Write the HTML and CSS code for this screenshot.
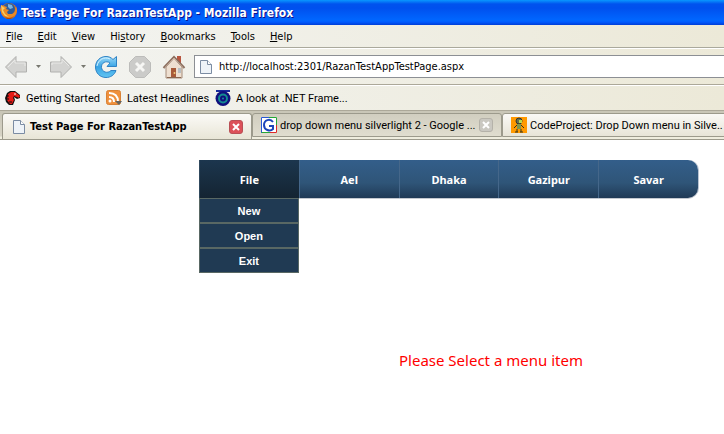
FILE: index.html
```html
<!DOCTYPE html>
<html lang="en">
<head>
    <meta charset="utf-8">
    <title>Test Page For RazanTestApp</title>
    <link rel="stylesheet" href="styles.css">
</head>
<body>
    <header class="browser">
        <div class="titlebar">
            <svg class="logo" width="18" height="18" viewBox="0 0 18 18">
                <circle cx="9" cy="9" r="8" fill="#d9781d"/>
                <circle cx="9" cy="7" r="6" fill="#2b5c9d"/>
                <path d="M8 2l4 1 1 3-3 1-2-2z" fill="#79b4df"/>
                <path d="M1 3l3 1 3 1-1 2 3 1-2 2 1 2 4 0 3-2 1-6 1 4-1 4-4 4H6L2 13 0 8z" fill="#e98a25"/>
                <path d="M1 3l2 2 2 1-2 2 2 4 4 3-4-1-3-4z" fill="#f7cd62"/>
                <path d="M4 14q5 4 10 0l-3 3H7z" fill="#a94710"/>
            </svg>
            <span>Test Page For RazanTestApp - Mozilla Firefox</span>
        </div>

        <nav class="menubar">
            <button><u>F</u>ile</button>
            <button><u>E</u>dit</button>
            <button><u>V</u>iew</button>
            <button>Hi<u>s</u>tory</button>
            <button><u>B</u>ookmarks</button>
            <button><u>T</u>ools</button>
            <button><u>H</u>elp</button>
        </nav>

        <div class="toolbar">
            <button class="nav-button" aria-label="Back">
                <svg width="24" height="24" viewBox="0 0 24 24"><path d="M1.500 12L12 1.500V7h10.500v10H12v5.500z" fill="#d3d3d1" stroke="#b0b0ae"/><path d="M4 12l7-7v3h10v3" fill="none" stroke="#e9e9e7"/></svg>
            </button>
            <button class="drop-button" aria-label="Back history"><svg width="5" height="3" viewBox="0 0 5 3"><path d="M0 0h5L2.500 3z" fill="#77776f"/></svg></button>
            <button class="nav-button" aria-label="Forward">
                <svg width="24" height="24" viewBox="0 0 24 24"><path d="M22.500 12L12 1.500V7H1.500v10H12v5.500z" fill="#d3d3d1" stroke="#b0b0ae"/><path d="M3 10V8h10V4l7 7" fill="none" stroke="#e9e9e7"/></svg>
            </button>
            <button class="drop-button" aria-label="Forward history"><svg width="5" height="3" viewBox="0 0 5 3"><path d="M0 0h5L2.500 3z" fill="#77776f"/></svg></button>
            <button class="nav-button" aria-label="Reload">
                <svg width="24" height="24" viewBox="0 0 24 24">
                    <defs><linearGradient id="reload" x2="0" y2="1"><stop offset="0" stop-color="#9ad9f8"/><stop offset=".5" stop-color="#37a3e4"/><stop offset="1" stop-color="#63c5f2"/></linearGradient></defs>
                    <path d="M22.500 1.500v10H13l3-3.500c-4-3-9 0-8.500 4.500.5 4.500 6 6.500 9.500 3H22c-1.500 4.500-5.500 7-10 7C6 22.500 1.500 18 1.500 12S6 1.500 12 1.500c3 0 5 1 7 3z" fill="url(#reload)" stroke="#2f83c5"/>
                    <path d="M3 11C4 5 10 1 16 4" fill="none" stroke="#d3f1ff"/>
                </svg>
            </button>
            <button class="nav-button stop" aria-label="Stop">
                <svg width="24" height="24" viewBox="0 0 24 24"><path d="M7.500 1.500h9l6 6v9l-6 6h-9l-6-6v-9z" fill="#cbcbc9" stroke="#bcbcba"/><path d="M8 8l8 8M16 8l-8 8" stroke="#f6f6f4" stroke-width="3"/></svg>
            </button>
            <button class="nav-button home" aria-label="Home">
                <svg width="24" height="24" viewBox="0 0 24 24">
                    <path d="M15 1h4v9h-4z" fill="#b8553f"/>
                    <path d="M4 12l8-9 8 9v11H4z" fill="#eedfd0" stroke="#a58c7a"/>
                    <path d="M1.500 13L12 2l10.500 11" fill="none" stroke="#8a6c5c" stroke-width="2"/>
                    <path d="M3 12.500L12 3l9 9.500" fill="none" stroke="#c9b3a2"/>
                    <path d="M9 13h5v10H9z" fill="#a85a38"/><path d="M16 13h3v5h-3z" fill="#b8bec2"/><path d="M5 22.500h14" stroke="#8a6650"/>
                    <circle cx="12.500" cy="18" r="1" fill="#f1ca7a"/>
                </svg>
            </button>
            <label class="address">
                <svg width="12" height="14" viewBox="0 0 12 14"><path d="M.5.500h7l4 4v9H.5z" fill="#eef3f8" stroke="#7b8ca3"/><path d="M7.500.500v4h4" fill="#fff" stroke="#7b8ca3"/></svg>
                <input type="text" aria-label="Address" value="http://localhost:2301/RazanTestAppTestPage.aspx">
            </label>
        </div>

        <nav class="bookmarks">
            <a href="#">
                <svg width="16" height="16" viewBox="0 0 16 16"><path d="M2 3l3-2h5l5 4v3l-3 1-3-2 1 3-2 5H4l-3-3-1-4z" fill="#111"/><path d="M3 4l3-2h4l5 4-1 2-2-1-3-1-1 2 1 2-2 4H5l-3-4z" fill="#e31b17"/><path d="M1 6h3M1 9h3M4 12h3" stroke="#111"/><path d="M9 4h2" stroke="#fff"/></svg>
                Getting Started
            </a>
            <a href="#">
                <svg width="16" height="16" viewBox="0 0 16 16"><rect x=".5" y=".5" width="14" height="14" rx="2" fill="#ef903d" stroke="#d98236"/><circle cx="4" cy="11" r="1.500" fill="#fff"/><path d="M3 7q5 0 5 5M3 3q9 0 9 9" fill="none" stroke="#fff" stroke-width="2"/><path d="M9 11h7l-3 4z" fill="#65645f"/></svg>
                Latest Headlines
            </a>
            <a href="#">
                <svg width="16" height="16" viewBox="0 0 16 16"><path d="M1 0h14v2H1z" fill="#172b99"/><circle cx="8" cy="8.500" r="7.500" fill="#10107d"/><circle cx="8" cy="8.500" r="4" fill="none" stroke="#138b91" stroke-width="2"/><circle cx="8" cy="8.500" r="1" fill="#1590a0"/></svg>
                A look at .NET Frame...
            </a>
        </nav>

        <div class="tabs">
            <div class="tab active">
                <svg width="16" height="14" viewBox="0 0 16 14"><path d="M2.500.500h7l4 4v9h-11z" fill="#eef3f8" stroke="#7b8ca3"/><path d="M9.500.500v4h4" fill="#fff" stroke="#7b8ca3"/></svg>
                <span>Test Page For RazanTestApp</span>
                <button class="close" aria-label="Close tab"><svg width="8" height="8" viewBox="0 0 8 8"><path d="M1 1l6 6M7 1L1 7" stroke="#fff" stroke-width="2"/></svg></button>
            </div>
            <div class="tab">
                <svg width="16" height="16" viewBox="0 0 16 16"><path d="M0 0h16v16H0z" fill="#fff"/><path d="M.5 16V.500H10" fill="none" stroke="#2857d4"/><path d="M8 .500h7.500V8" fill="none" stroke="#24a737"/><path d="M15.500 8v7.500H8" fill="none" stroke="#dd2929"/><path d="M.5 15.500H9" stroke="#24a737"/><path d="M12 5C9 1 3 3 3 8s6 7 9 4V9H8" fill="none" stroke="#1c45ba" stroke-width="2"/></svg>
                <span>drop down menu silverlight 2 - Google ...</span>
                <button class="close" aria-label="Close tab"><svg width="8" height="8" viewBox="0 0 8 8"><path d="M1 1l6 6M7 1L1 7" stroke="#fff" stroke-width="2"/></svg></button>
            </div>
            <div class="tab light">
                <svg width="16" height="16" viewBox="0 0 16 16"><path d="M0 0h16v16H0z" fill="#ff9900"/><circle cx="8" cy="4" r="3" fill="#667052" stroke="#333"/><path d="M8 3h3v3H8z" fill="#b9d84f"/><path d="M6 7h4v5H6z" fill="#81964b"/><path d="M6 8l-3 3M10 8l3 3M6 12v3M10 12v3M4 15h3M9 15h3" stroke="#34351f" stroke-width="1"/></svg>
                <span>CodeProject: Drop Down menu in Silve..</span>
            </div>
        </div>
    </header>

    <main class="page">
        <nav class="menu">
            <ul class="menu-bar">
                <li class="menu-item open">
                    <a href="#">File</a>
                    <ul class="submenu">
                        <li><a href="#">New</a></li>
                        <li><a href="#">Open</a></li>
                        <li><a href="#">Exit</a></li>
                    </ul>
                </li>
                <li class="menu-item"><a href="#">Ael</a></li>
                <li class="menu-item"><a href="#">Dhaka</a></li>
                <li class="menu-item"><a href="#">Gazipur</a></li>
                <li class="menu-item"><a href="#">Savar</a></li>
            </ul>
        </nav>
        <p class="message">Please Select a menu item</p>
    </main>
</body>
</html>
```
FILE: styles.css
```css
* {
    box-sizing: border-box;
}

body {
    margin: 0;
    background: #fff;
    color: #000;
    font-family: "DejaVu Sans Condensed", "DejaVu Sans", sans-serif;
    font-size: 11px;
    overflow-x: hidden;
}

button {
    border: none;
    padding: 0;
    background: none;
    color: inherit;
    font: inherit;
}

a {
    color: inherit;
    text-decoration: none;
}

ul {
    list-style: none;
    margin: 0;
    padding: 0;
}

svg {
    display: block;
    flex-shrink: 0;
}

.browser {
    background: linear-gradient(to right, #f3f4f2, #ece9d8);
}

.titlebar {
    display: flex;
    align-items: center;
    gap: 3px;
    height: 25px;
    background: linear-gradient(#0997ff 0, #0053ee 4px, #0050ee 8px, #0066ff 20px, #005bff 22px, #003dd7 25px);
    color: #fff;
    font-size: 12px;
    font-weight: bold;
    text-shadow: 1px 1px #0f1089;
}

.logo {
    margin-top: -4px;
}

.menubar {
    display: flex;
    align-items: center;
    gap: 15px;
    height: 23px;
    padding-left: 6px;
    border-bottom: 1px solid #aaa99c;
}

.toolbar {
    display: flex;
    align-items: center;
    height: 37px;
    padding-left: 4px;
    border-top: 1px solid #fff;
    border-bottom: 1px solid #aca899;
}

.drop-button {
    width: 21px;
    padding-left: 8px;
}

.stop {
    margin-left: 10px;
}

.home {
    margin-left: 10px;
}

.address {
    display: flex;
    flex: 1;
    align-items: center;
    gap: 7px;
    height: 23px;
    margin-left: 8px;
    padding-left: 5px;
    border: 1px solid #8c8f94;
    border-right: none;
    background: #fff;
}

.address input {
    flex: 1;
    border: none;
    outline: none;
    padding: 0;
    background: none;
    font: inherit;
}

.bookmarks {
    display: flex;
    align-items: center;
    gap: 6px;
    height: 26px;
    padding-left: 5px;
    border-top: 1px solid #fff;
    border-bottom: 1px solid #aca899;
    font-family: Roboto, sans-serif;
}

.bookmarks a {
    display: flex;
    align-items: center;
    gap: 5px;
}

.tabs {
    display: flex;
    height: 29px;
    padding: 2px 0 0 2px;
    border-bottom: 1px solid #9c9a8c;
    background: linear-gradient(#c9c6b7, #d6d3c5 25px, #efedde 26px);
}

.tab {
    display: flex;
    flex: 0 0 250px;
    align-items: center;
    gap: 3px;
    height: 24px;
    padding: 0 8px;
    border: 1px solid #9c9a8c;
    border-radius: 3px 3px 0 0;
    background: linear-gradient(#d1cec0, #e0ddcf);
    font-family: Roboto, sans-serif;
    white-space: nowrap;
}

.tab.active {
    height: 26px;
    border-bottom: none;
    background: linear-gradient(#fbfaf7, #e8e5d6);
    font-family: "DejaVu Sans Condensed", "DejaVu Sans", sans-serif;
    font-weight: bold;
}

.tab.light {
    background: linear-gradient(#faf9f6, #e7e4d7);
}

.close {
    display: grid;
    place-items: center;
    width: 14px;
    height: 14px;
    margin-left: auto;
    border: 1px solid #b5b2a9;
    border-radius: 3px;
    background: #cac8c1;
}

.active .close {
    border-color: #b95055;
    background: #dc5159;
}

.page {
    padding: 20px 26px 0 199px;
}

.menu-bar {
    display: grid;
    grid-template-columns: repeat(5, 1fr);
    height: 38px;
    border-radius: 0 10px 10px 0;
    background: linear-gradient(#335e8a, #2f5578 60%, #203a56);
    box-shadow: 0 1px #c5c9d0, 1px 0 #bac4d2;
    color: #fff;
    font: bold 11px "Noto Sans", sans-serif;
}

.menu-item {
    position: relative;
    border-left: 1px solid #45678a;
}

.menu-item > a {
    display: grid;
    place-items: center;
    height: 38px;
}

.open {
    border-left-color: #30495d;
    background: linear-gradient(#1c364e, #142432);
}

.submenu {
    position: absolute;
    top: 38px;
    left: -1px;
    right: 0;
    border: 1px solid #596864;
    background: #203a53;
    font-family: "Liberation Sans", Arial, sans-serif;
}

.submenu a {
    display: grid;
    place-items: center;
    height: 23px;
}

.submenu li + li a {
    height: 25px;
    border-top: 2px solid #596864;
}

.message {
    margin: 151px 0 0 200px;
    color: #f00;
    font: 15px/22px "Noto Sans", sans-serif;
    white-space: nowrap;
}
```
